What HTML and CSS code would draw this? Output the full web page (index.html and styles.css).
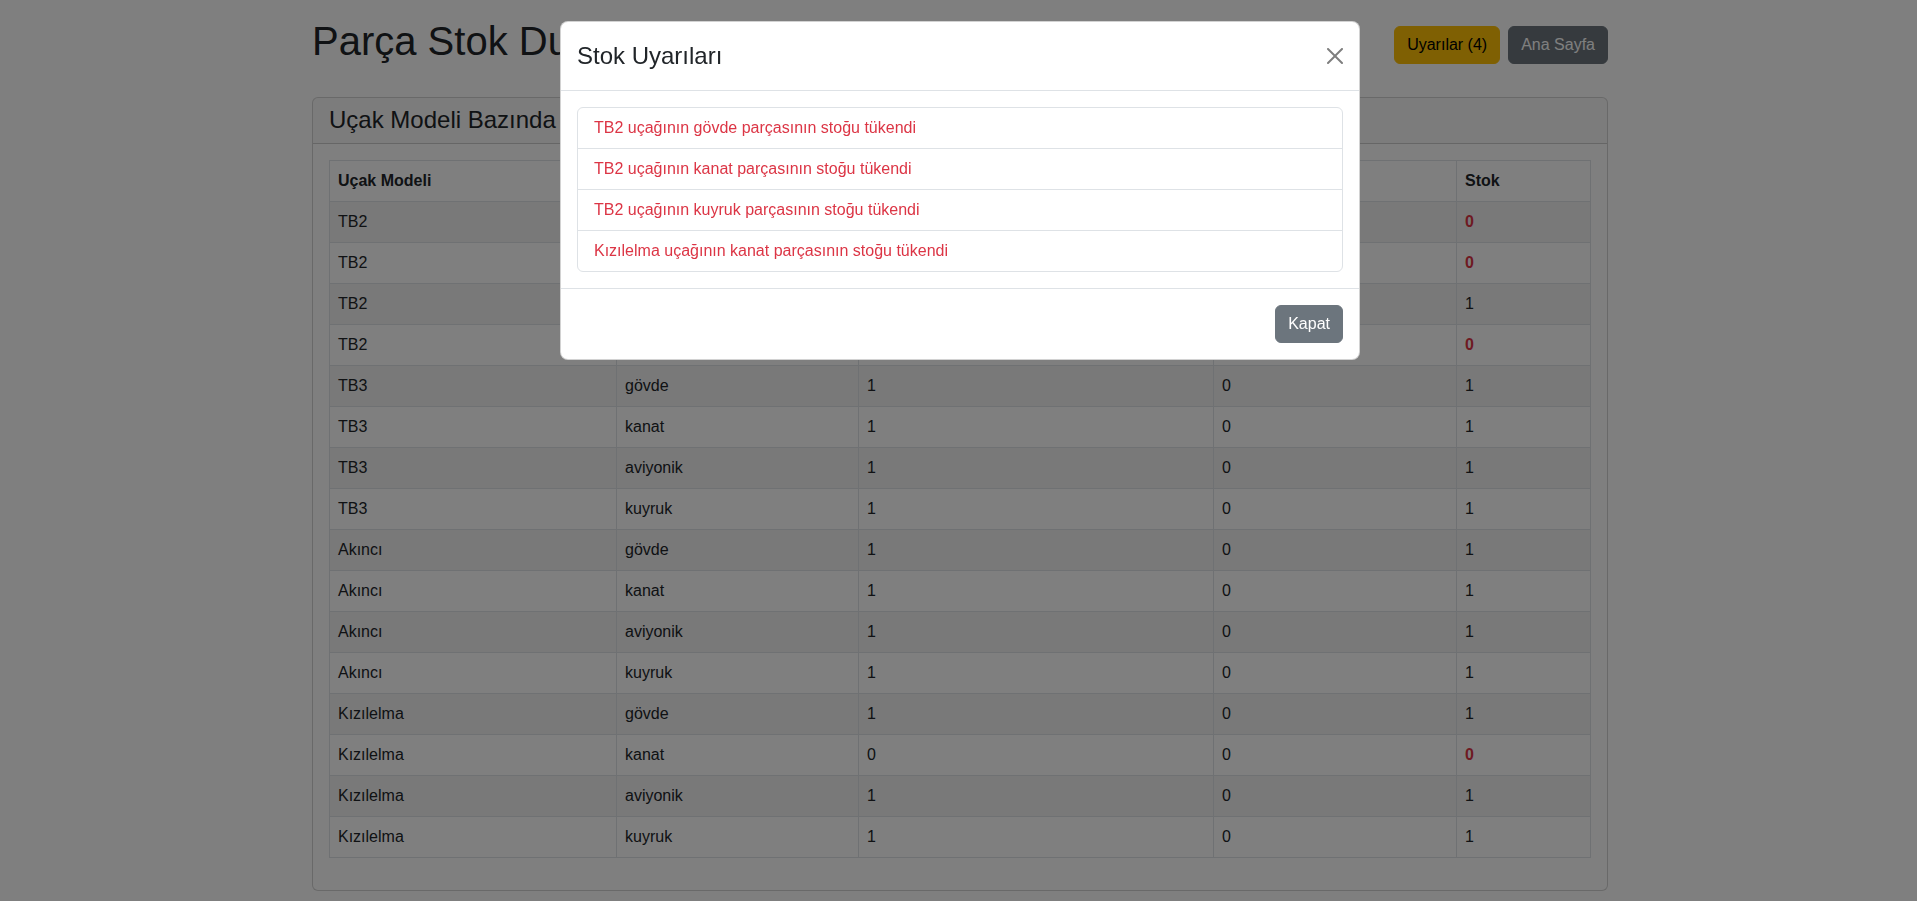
FILE: index.html
```html
<!DOCTYPE html>
<html lang="tr">
<head>
<meta charset="utf-8">
<title>Parça Stok Durumu</title>
<link rel="stylesheet" href="styles.css">
</head>
<body>
<div class="page">
  <div class="container">
    <div class="top-bar">
      <h1 class="page-title">Parça Stok Durumu</h1>
      <div class="actions">
        <button class="btn btn-warning" type="button">Uyarılar (4)</button>
        <a class="btn btn-secondary" href="#">Ana Sayfa</a>
      </div>
    </div>

    <div class="card">
      <div class="card-header">
        <h4 class="card-title">Uçak Modeli Bazında Parça Stok Durumu</h4>
      </div>
      <div class="card-body">
        <table class="stock-table">
          <colgroup>
            <col class="c1"><col class="c2"><col class="c3"><col class="c4"><col class="c5">
          </colgroup>
          <thead>
            <tr><th>Uçak Modeli</th><th>Parça Tipi</th><th>Üretilen</th><th>Kullanılan</th><th>Stok</th></tr>
          </thead>
          <tbody>
            <tr><td>TB2</td><td>gövde</td><td>0</td><td>0</td><td class="out">0</td></tr>
            <tr><td>TB2</td><td>kanat</td><td>0</td><td>0</td><td class="out">0</td></tr>
            <tr><td>TB2</td><td>aviyonik</td><td>1</td><td>0</td><td>1</td></tr>
            <tr><td>TB2</td><td>kuyruk</td><td>0</td><td>0</td><td class="out">0</td></tr>
            <tr><td>TB3</td><td>gövde</td><td>1</td><td>0</td><td>1</td></tr>
            <tr><td>TB3</td><td>kanat</td><td>1</td><td>0</td><td>1</td></tr>
            <tr><td>TB3</td><td>aviyonik</td><td>1</td><td>0</td><td>1</td></tr>
            <tr><td>TB3</td><td>kuyruk</td><td>1</td><td>0</td><td>1</td></tr>
            <tr><td>Akıncı</td><td>gövde</td><td>1</td><td>0</td><td>1</td></tr>
            <tr><td>Akıncı</td><td>kanat</td><td>1</td><td>0</td><td>1</td></tr>
            <tr><td>Akıncı</td><td>aviyonik</td><td>1</td><td>0</td><td>1</td></tr>
            <tr><td>Akıncı</td><td>kuyruk</td><td>1</td><td>0</td><td>1</td></tr>
            <tr><td>Kızılelma</td><td>gövde</td><td>1</td><td>0</td><td>1</td></tr>
            <tr><td>Kızılelma</td><td>kanat</td><td>0</td><td>0</td><td class="out">0</td></tr>
            <tr><td>Kızılelma</td><td>aviyonik</td><td>1</td><td>0</td><td>1</td></tr>
            <tr><td>Kızılelma</td><td>kuyruk</td><td>1</td><td>0</td><td>1</td></tr>
          </tbody>
        </table>
      </div>
    </div>
  </div>
</div>

<div class="backdrop"></div>

<div class="modal">
  <div class="modal-dialog">
    <div class="modal-content">
      <div class="modal-header">
        <h4 class="modal-title">Stok Uyarıları</h4>
        <button class="btn-close" type="button" aria-label="Kapat">
          <svg width="16" height="16" viewBox="0 0 16 16"><path d="M.293.293a1 1 0 0 1 1.414 0L8 6.586 14.293.293a1 1 0 1 1 1.414 1.414L9.414 8l6.293 6.293a1 1 0 0 1-1.414 1.414L8 9.414l-6.293 6.293a1 1 0 0 1-1.414-1.414L6.586 8 .293 1.707a1 1 0 0 1 0-1.414z"/></svg>
        </button>
      </div>
      <div class="modal-body">
        <ul class="list-group">
          <li class="list-item">TB2 uçağının gövde parçasının stoğu tükendi</li>
          <li class="list-item">TB2 uçağının kanat parçasının stoğu tükendi</li>
          <li class="list-item">TB2 uçağının kuyruk parçasının stoğu tükendi</li>
          <li class="list-item">Kızılelma uçağının kanat parçasının stoğu tükendi</li>
        </ul>
      </div>
      <div class="modal-footer">
        <button class="btn btn-secondary" type="button">Kapat</button>
      </div>
    </div>
  </div>
</div>
</body>
</html>
```

FILE: styles.css
```css
* { box-sizing: border-box; }

html, body {
  margin: 0;
  height: 100%;
}

body {
  font-family: "Liberation Sans", Arial, sans-serif;
  font-size: 16px;
  line-height: 1.5;
  color: #212529;
  background: #fff;
  overflow: hidden;
  padding-left: 3px;
}

.container {
  max-width: 1320px;
  margin: 0 auto;
  padding: 17px 12px 0;
}

.top-bar {
  display: flex;
  justify-content: space-between;
  align-items: center;
  margin-bottom: 24px;
}

.page-title {
  margin: 0 0 8px;
  font-size: 40px;
  font-weight: 500;
  line-height: 1.2;
}

.actions {
  display: flex;
  gap: 8px;
}

.btn {
  display: inline-block;
  font-family: inherit;
  font-size: 16px;
  line-height: 1.5;
  font-weight: 400;
  padding: 6px 12px;
  border: 1px solid transparent;
  border-radius: 6px;
  text-decoration: none;
  cursor: pointer;
}

.btn-warning {
  background: #ffc107;
  border-color: #ffc107;
  color: #000;
}

.btn-secondary {
  background: #6c757d;
  border-color: #6c757d;
  color: #fff;
}

.card {
  border: 1px solid rgba(0, 0, 0, 0.175);
  border-radius: 6px;
  background: #fff;
}

.card-header {
  padding: 8px 16px;
  background: rgba(33, 37, 41, 0.03);
  border-bottom: 1px solid rgba(0, 0, 0, 0.175);
  border-radius: 5px 5px 0 0;
}

.card-title {
  margin: 0;
  font-size: 24px;
  font-weight: 500;
  line-height: 1.2;
}

.card-body {
  padding: 16px;
}

.stock-table {
  width: 100%;
  border-collapse: collapse;
  table-layout: fixed;
  margin-bottom: 16px;
}

.stock-table .c1 { width: 287px; }
.stock-table .c2 { width: 242px; }
.stock-table .c3 { width: 355px; }
.stock-table .c4 { width: 243px; }

.stock-table th,
.stock-table td {
  padding: 8px;
  border: 1px solid #dee2e6;
  text-align: left;
  vertical-align: top;
  line-height: 1.5;
  white-space: nowrap;
  overflow: hidden;
}

.stock-table th {
  font-weight: 700;
}

.stock-table tbody tr:nth-child(odd) td {
  background: rgba(0, 0, 0, 0.05);
}

.stock-table td.out {
  color: #dc3545;
  font-weight: 700;
}

.backdrop {
  position: fixed;
  inset: 0;
  background: rgba(0, 0, 0, 0.5);
  z-index: 10;
}

.modal {
  position: fixed;
  inset: 0;
  z-index: 20;
  padding-left: 3px;
}

.modal-dialog {
  width: 800px;
  margin: 21px auto 0;
}

.modal-content {
  background: #fff;
  border: 1px solid rgba(0, 0, 0, 0.175);
  border-radius: 8px;
}

.modal-header {
  display: flex;
  align-items: center;
  padding: 16px;
  border-bottom: 1px solid #dee2e6;
}

.modal-title {
  margin: 0;
  font-size: 24px;
  font-weight: 500;
  line-height: 1.5;
}

.btn-close {
  display: flex;
  padding: 8px;
  margin: -8px -8px -8px auto;
  border: 0;
  background: transparent;
  opacity: 0.5;
  cursor: pointer;
}

.btn-close svg {
  display: block;
  fill: #000;
}

.modal-body {
  padding: 16px;
}

.list-group {
  list-style: none;
  margin: 0;
  padding: 0;
  border: 1px solid #dee2e6;
  border-radius: 6px;
}

.list-item {
  padding: 8px 16px;
  color: #dc3545;
  line-height: 1.5;
}

.list-item + .list-item {
  border-top: 1px solid #dee2e6;
}

.modal-footer {
  display: flex;
  justify-content: flex-end;
  padding: 12px;
  border-top: 1px solid #dee2e6;
}

.modal-footer .btn {
  margin: 4px;
}
```
